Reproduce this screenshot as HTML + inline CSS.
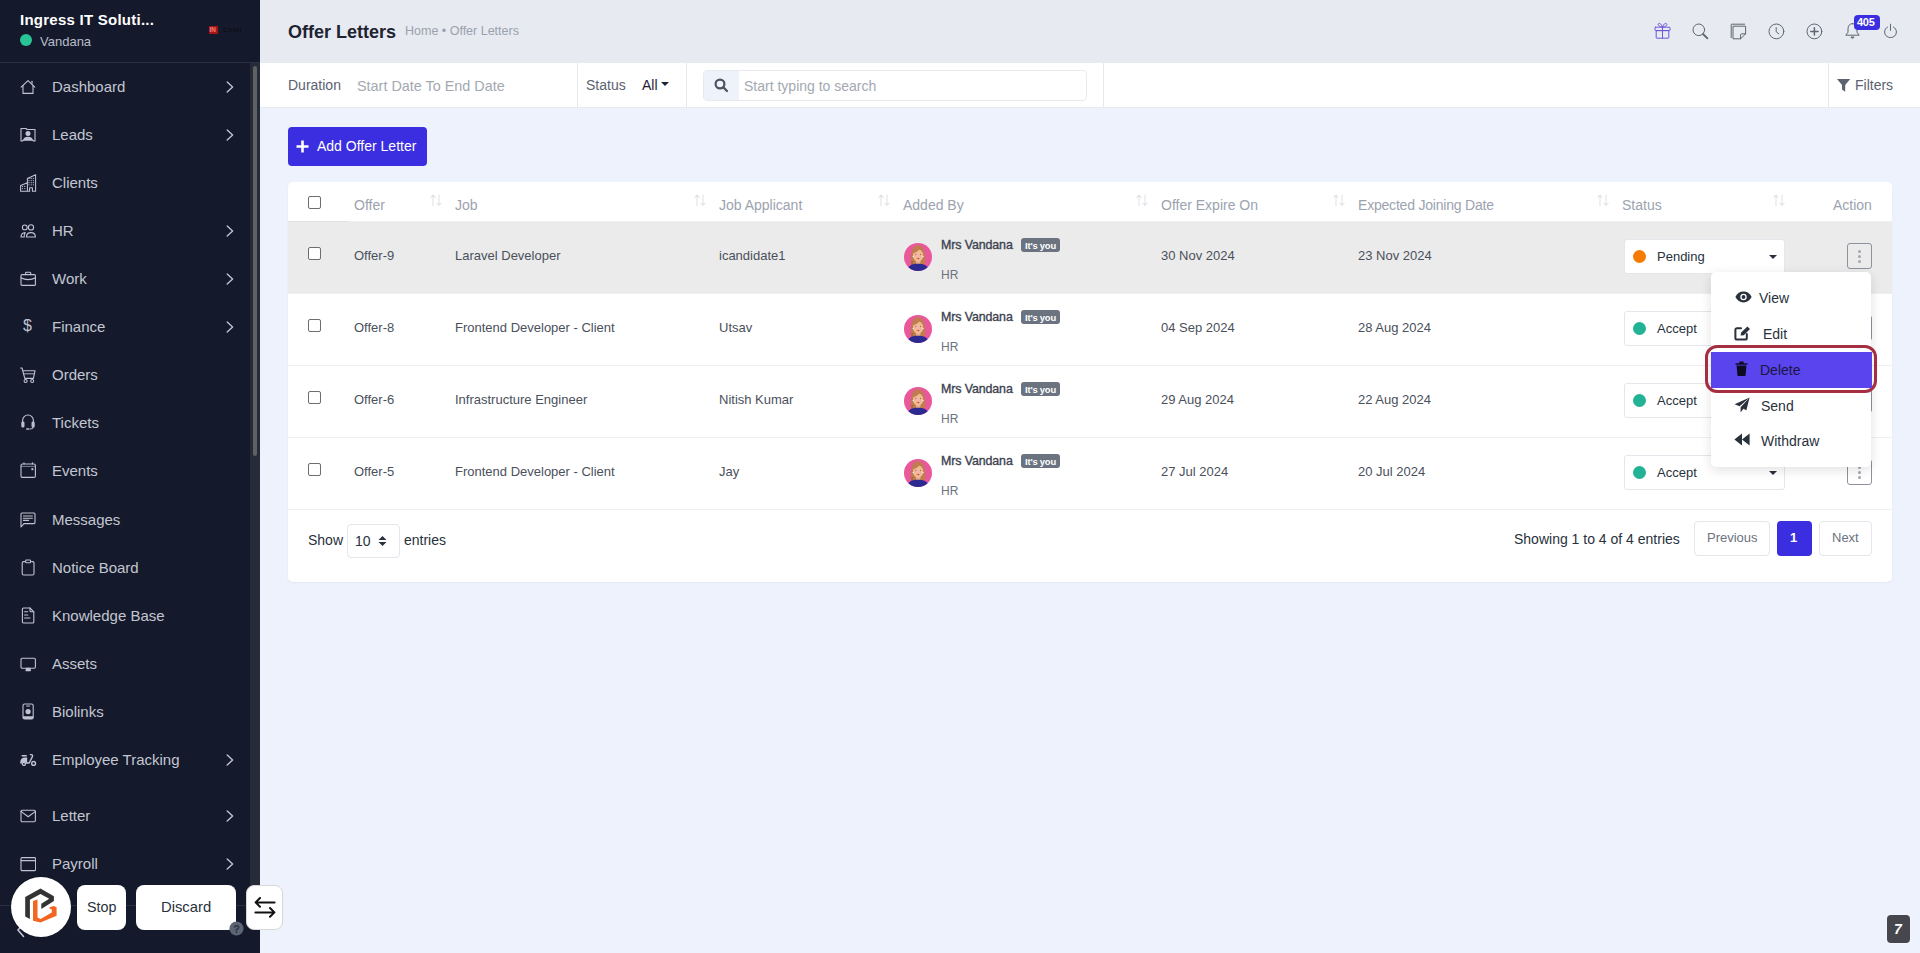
<!DOCTYPE html>
<html><head><meta charset="utf-8">
<style>
*{box-sizing:border-box;margin:0;padding:0}
html,body{width:1920px;height:953px;overflow:hidden}
body{font-family:"Liberation Sans",sans-serif;background:#eef2fc;position:relative;color:#28313c}
.abs{position:absolute}
.tx{position:absolute;white-space:nowrap;line-height:1}
#sb{position:absolute;left:0;top:0;width:260px;height:953px;background:#141a2b;overflow:hidden}
#sbh{position:absolute;left:0;top:0;width:260px;height:63px;border-bottom:1px solid #2b3040}
.brand{position:absolute;left:20px;top:11px;font-size:15px;font-weight:bold;color:#fff;white-space:nowrap;line-height:18px;letter-spacing:0.25px}
.uname{position:absolute;left:40px;top:34px;font-size:13px;color:#b9bdc9;line-height:15px}
.dot{position:absolute;left:20px;top:34px;width:12px;height:12px;border-radius:50%;background:#28c397}
.track{position:absolute;left:250px;top:63px;width:10px;height:822px;background:#252b38}
.thumb{position:absolute;left:253px;top:66px;width:4px;height:390px;border-radius:2px;background:#606163}
.mt{position:absolute;left:52px;font-size:15px;line-height:17px;color:#c3c6d2;white-space:nowrap}
.dollar{position:absolute;left:23px;font-size:16px;line-height:18px;color:#c0c4d2}
#hdr{position:absolute;left:260px;top:0;width:1660px;height:63px;background:#e7eaf1}
#fb{position:absolute;left:260px;top:63px;width:1660px;height:45px;background:#fff;border-bottom:1px solid #e6e9ef}
.vd{position:absolute;top:63px;width:1px;height:44px;background:#e6e8ed}
.card{position:absolute;left:288px;top:182px;width:1604px;height:400px;background:#fff;border-radius:5px;box-shadow:0 1px 2px rgba(30,40,90,0.05)}
.th{position:absolute;white-space:nowrap;line-height:1;font-size:14px;color:#9ca3af;top:198px}
.td{position:absolute;white-space:nowrap;line-height:1;font-size:13px;color:#4a505b}
.cb{position:absolute;left:308px;width:13px;height:13px;border:1px solid #6d6d6d;border-radius:2px;background:#fff}
.nm{position:absolute;left:941px;white-space:nowrap;line-height:1;font-size:12.4px;font-weight:normal;color:#3c4350;-webkit-text-stroke:0.35px #3c4350;letter-spacing:-0.1px}
.badge{position:absolute;left:1021px;width:39px;height:14px;border-radius:3px;background:#6b7280;color:#fff;font-size:9.4px;font-weight:bold;line-height:15px;text-align:center;letter-spacing:-0.2px}
.hr{position:absolute;left:941px;white-space:nowrap;line-height:1;font-size:12px;color:#6b7280}
.sel{position:absolute;left:1624px;width:161px;height:35px;background:#fff;border:1px solid #e4e6eb;border-radius:3px}
.sdot{position:absolute;left:8px;top:10px;width:13px;height:13px;border-radius:50%}
.stx{position:absolute;left:32px;top:10px;font-size:13px;line-height:1;color:#28313c;white-space:nowrap}
.caret{position:absolute;left:144px;top:15px;width:0;height:0;border-left:4px solid transparent;border-right:4px solid transparent;border-top:4px solid #28313c}
.act{position:absolute;left:1847px;width:25px;height:26px;border:1px solid #8d929b;border-radius:3px;background:transparent}
.act i{position:absolute;left:10px;width:3px;height:3px;border-radius:50%;background:#a3a7ae}
.act i:nth-child(1){top:6px}.act i:nth-child(2){top:11px}.act i:nth-child(3){top:16px}
.sorti{position:absolute;top:194px}
</style></head><body>
<div id="sb">
  <div id="sbh">
    <div class="brand">Ingress IT Soluti...</div>
    <div class="dot"></div>
    <div class="uname">Vandana</div>
    <div class="abs" style="left:209px;top:26px;width:8.5px;height:8px;background:#a81414;border-radius:1px"></div>
    <div class="tx" style="left:209.6px;top:27.4px;font-size:6.4px;font-weight:bold;color:#f08080;letter-spacing:-0.2px">IN</div>
    <div class="tx" style="left:223px;top:27px;font-size:6.2px;font-weight:bold;color:#0b0e18;letter-spacing:0.3px">CASH</div>
  </div>
  <div class="track"></div><div class="thumb"></div>
<div class="mt" style="top:78px">Dashboard</div>
<svg class="abs" style="left:20px;top:79px" width="16" height="16" viewBox="0 0 16 16" fill="none" stroke="#c0c4d2" stroke-width="1.1" stroke-linecap="round" stroke-linejoin="round"><path d="M1.2 8.2 L8 1.6 L14.8 8.2"/><path d="M3 6.6 V14.4 H13 V6.6"/><path d="M12 2.2 V4.6"/></svg>
<svg class="abs" style="left:226px;top:81px" width="8" height="12" viewBox="0 0 8 12" fill="none" stroke="#c0c4d2" stroke-width="1.4" stroke-linecap="round" stroke-linejoin="round"><path d="M1.2 1 L6.6 6 L1.2 11"/></svg>
<div class="mt" style="top:126px">Leads</div>
<svg class="abs" style="left:20px;top:127px" width="16" height="15" viewBox="0 0 16 15" fill="none" stroke="#c0c4d2" stroke-width="1.1" stroke-linecap="round" stroke-linejoin="round"><path d="M1 14 V1.5 H6 L7 2.5 H15 V14 H13.5 L12.5 13 H3.5 L2.5 14 Z"/><circle cx="8" cy="6.6" r="2.5" fill="#c0c4d2" stroke="none"/><path d="M3 13.6 C3.4 10.8 5.6 9.8 8 9.8 C10.4 9.8 12.6 10.8 13 13.6 Z" fill="#c0c4d2" stroke="none"/></svg>
<svg class="abs" style="left:226px;top:129px" width="8" height="12" viewBox="0 0 8 12" fill="none" stroke="#c0c4d2" stroke-width="1.4" stroke-linecap="round" stroke-linejoin="round"><path d="M1.2 1 L6.6 6 L1.2 11"/></svg>
<div class="mt" style="top:174px">Clients</div>
<svg class="abs" style="left:20px;top:174px" width="17" height="18" viewBox="0 0 17 18" fill="none" stroke="#c0c4d2" stroke-width="1.1" stroke-linecap="round" stroke-linejoin="round"><path d="M0.6 17.2 V11.6 L7.4 8.8 M7.4 17.2 V4.6 L15.6 0.8 V17.2 H12.4 V13.8 H9.6 V17.2 H0.6" stroke-width="1.05"/><g fill="#c0c4d2" stroke="none"><circle cx="2.5" cy="12.4" r="0.62"/><circle cx="4.8" cy="12.4" r="0.62"/><circle cx="2.5" cy="14.6" r="0.62"/><circle cx="4.8" cy="14.6" r="0.62"/><circle cx="9.0" cy="4.4" r="0.62"/><circle cx="11.2" cy="4.4" r="0.62"/><circle cx="13.3" cy="4.4" r="0.62"/><circle cx="9.0" cy="6.6" r="0.62"/><circle cx="11.2" cy="6.6" r="0.62"/><circle cx="13.3" cy="6.6" r="0.62"/><circle cx="9.0" cy="8.7" r="0.62"/><circle cx="11.2" cy="8.7" r="0.62"/><circle cx="13.3" cy="8.7" r="0.62"/><circle cx="9.0" cy="10.8" r="0.62"/><circle cx="11.2" cy="10.8" r="0.62"/><circle cx="13.3" cy="10.8" r="0.62"/></g></svg>
<div class="mt" style="top:222px">HR</div>
<svg class="abs" style="left:20px;top:224px" width="16" height="14" viewBox="0 0 16 14" fill="none" stroke="#c0c4d2" stroke-width="1.1" stroke-linecap="round" stroke-linejoin="round"><circle cx="4.8" cy="3.4" r="2.4"/><circle cx="11" cy="3.4" r="2.6"/><path d="M1 13 C1 10.5 2.5 8.8 5.2 8.6 C4.2 9.8 4 11.5 4.2 13 Z"/><path d="M6.4 13 C6.4 10.2 8.4 8.6 11 8.6 C13.6 8.6 15.4 10.2 15.4 13 Z"/></svg>
<svg class="abs" style="left:226px;top:225px" width="8" height="12" viewBox="0 0 8 12" fill="none" stroke="#c0c4d2" stroke-width="1.4" stroke-linecap="round" stroke-linejoin="round"><path d="M1.2 1 L6.6 6 L1.2 11"/></svg>
<div class="mt" style="top:270px">Work</div>
<svg class="abs" style="left:20px;top:271px" width="16" height="15" viewBox="0 0 16 15" fill="none" stroke="#c0c4d2" stroke-width="1.1" stroke-linecap="round" stroke-linejoin="round"><rect x="1" y="3.6" width="14.4" height="10.8" rx="1"/><path d="M5.6 3.6 V2.2 C5.6 1.6 6 1.2 6.6 1.2 H9.8 C10.4 1.2 10.8 1.6 10.8 2.2 V3.6"/><path d="M1 6.8 C5 9.2 11.4 9.2 15.4 6.8"/></svg>
<svg class="abs" style="left:226px;top:273px" width="8" height="12" viewBox="0 0 8 12" fill="none" stroke="#c0c4d2" stroke-width="1.4" stroke-linecap="round" stroke-linejoin="round"><path d="M1.2 1 L6.6 6 L1.2 11"/></svg>
<div class="mt" style="top:318px">Finance</div>
<div class="dollar" style="top:317px">$</div>
<svg class="abs" style="left:226px;top:321px" width="8" height="12" viewBox="0 0 8 12" fill="none" stroke="#c0c4d2" stroke-width="1.4" stroke-linecap="round" stroke-linejoin="round"><path d="M1.2 1 L6.6 6 L1.2 11"/></svg>
<div class="mt" style="top:366px">Orders</div>
<svg class="abs" style="left:20px;top:367px" width="16" height="17" viewBox="0 0 16 17" fill="none" stroke="#c0c4d2" stroke-width="1.1" stroke-linecap="round" stroke-linejoin="round"><path d="M0.6 1 H2 L4.8 11.4 H13.4 L15 3.8 H3"/><path d="M3.6 6.8 H14.4" stroke-width="0.9"/><circle cx="5.6" cy="14" r="1.5"/><circle cx="12.2" cy="14" r="1.5"/></svg>
<div class="mt" style="top:414px">Tickets</div>
<svg class="abs" style="left:21px;top:414px" width="14" height="17" viewBox="0 0 14 17" fill="none" stroke="#c0c4d2" stroke-width="1.1" stroke-linecap="round" stroke-linejoin="round"><path d="M1.6 9 V6.6 C1.6 3.2 4 1 7 1 C10 1 12.4 3.2 12.4 6.6 V9"/><rect x="0.9" y="8" width="2" height="5" rx="0.8" fill="#c0c4d2"/><rect x="11.1" y="8" width="2" height="5" rx="0.8" fill="#c0c4d2"/><path d="M12.2 13 C12 14.6 10.6 15 9 15"/><rect x="5" y="14.2" width="3.4" height="1.6" rx="0.8" fill="#c0c4d2" stroke="none"/></svg>
<div class="mt" style="top:462px">Events</div>
<svg class="abs" style="left:20px;top:462px" width="16" height="17" viewBox="0 0 16 17" fill="none" stroke="#c0c4d2" stroke-width="1.1" stroke-linecap="round" stroke-linejoin="round"><rect x="1" y="2" width="14.4" height="13.4" rx="1.4"/><path d="M4 0.8 V2 M12.4 0.8 V2"/><path d="M1 4.4 H15.4" stroke-width="0.6"/><rect x="11.4" y="6.2" width="2" height="2" fill="#c0c4d2" stroke="none"/></svg>
<div class="mt" style="top:511px">Messages</div>
<svg class="abs" style="left:20px;top:512px" width="16" height="16" viewBox="0 0 16 16" fill="none" stroke="#c0c4d2" stroke-width="1.1" stroke-linecap="round" stroke-linejoin="round"><path d="M2 1 H14 C14.6 1 15 1.4 15 2 V10.6 C15 11.2 14.6 11.6 14 11.6 H4 L1 15 V2 C1 1.4 1.4 1 2 1 Z"/><path d="M3.4 4 H12.4 M3.4 6.2 H12.4 M3.4 8.4 H8.6"/></svg>
<div class="mt" style="top:559px">Notice Board</div>
<svg class="abs" style="left:21px;top:559px" width="14" height="17" viewBox="0 0 14 17" fill="none" stroke="#c0c4d2" stroke-width="1.1" stroke-linecap="round" stroke-linejoin="round"><path d="M3.6 2.6 H2.6 C1.8 2.6 1.2 3.2 1.2 4 V14.6 C1.2 15.4 1.8 16 2.6 16 H11.6 C12.4 16 13 15.4 13 14.6 V4 C13 3.2 12.4 2.6 11.6 2.6 H10.6"/><rect x="4.6" y="1" width="5" height="2.8" rx="0.9"/></svg>
<div class="mt" style="top:607px">Knowledge Base</div>
<svg class="abs" style="left:21px;top:607px" width="14" height="17" viewBox="0 0 14 17" fill="none" stroke="#c0c4d2" stroke-width="1.1" stroke-linecap="round" stroke-linejoin="round"><path d="M1.4 2 C1.4 1.4 1.8 1 2.4 1 H9 L12.8 4.8 V15 C12.8 15.6 12.4 16 11.8 16 H2.4 C1.8 16 1.4 15.6 1.4 15 Z"/><path d="M9 1 V3.8 C9 4.4 9.4 4.8 10 4.8 H12.8"/><path d="M3.6 4.8 H6.6 M3.6 8 H6.8 M3.6 11 H9"/></svg>
<div class="mt" style="top:655px">Assets</div>
<svg class="abs" style="left:20px;top:657px" width="16" height="15" viewBox="0 0 16 15" fill="none" stroke="#c0c4d2" stroke-width="1.1" stroke-linecap="round" stroke-linejoin="round"><rect x="1" y="1.2" width="14.4" height="10" rx="1.2"/><path d="M6 13.6 H10.4 L9.8 11.2 H6.6 Z" fill="#c0c4d2"/></svg>
<div class="mt" style="top:703px">Biolinks</div>
<svg class="abs" style="left:22px;top:703px" width="12" height="17" viewBox="0 0 12 17" fill="none" stroke="#c0c4d2" stroke-width="1.1" stroke-linecap="round" stroke-linejoin="round"><rect x="1" y="1" width="10.2" height="15" rx="1.6"/><path d="M4.6 3 H7.6"/><circle cx="6.1" cy="8.6" r="2.6" fill="#c0c4d2" stroke="none"/><path d="M1 13.2 H11.2 V14.6 C11.2 15.4 10.6 16 9.6 16 H2.6 C1.6 16 1 15.4 1 14.6 Z" fill="#c0c4d2" stroke="none"/></svg>
<div class="mt" style="top:751px">Employee Tracking</div>
<svg class="abs" style="left:20px;top:753px" width="17" height="13" viewBox="0 0 17 13" fill="none" stroke="#c0c4d2" stroke-width="1.1" stroke-linecap="round" stroke-linejoin="round"><path d="M0.2 10 C0.2 6.4 2 4.6 5.2 4.6 H7.2 V10.6 H6 A2.2 2.2 0 0 0 1.8 10.6 H0.2 Z" fill="#c0c4d2" stroke="none"/><path d="M2.2 2.8 H6.2" stroke-width="1.5"/><circle cx="3.9" cy="10.9" r="1.5" stroke-width="1.3"/><path d="M7 10 H9.2 L12.4 3.6 C12.8 2.4 12.4 1.6 11.2 1.6 H10.4" stroke-width="1.4"/><circle cx="13.6" cy="10.4" r="1.9" stroke-width="1.4"/></svg>
<svg class="abs" style="left:226px;top:754px" width="8" height="12" viewBox="0 0 8 12" fill="none" stroke="#c0c4d2" stroke-width="1.4" stroke-linecap="round" stroke-linejoin="round"><path d="M1.2 1 L6.6 6 L1.2 11"/></svg>
<div class="mt" style="top:807px">Letter</div>
<svg class="abs" style="left:20px;top:809px" width="16" height="14" viewBox="0 0 16 14" fill="none" stroke="#c0c4d2" stroke-width="1.1" stroke-linecap="round" stroke-linejoin="round"><rect x="1" y="1.2" width="14.4" height="11.6" rx="1.2"/><path d="M1 2.4 L8.2 7.8 L15.4 2.4"/></svg>
<svg class="abs" style="left:226px;top:810px" width="8" height="12" viewBox="0 0 8 12" fill="none" stroke="#c0c4d2" stroke-width="1.4" stroke-linecap="round" stroke-linejoin="round"><path d="M1.2 1 L6.6 6 L1.2 11"/></svg>
<div class="mt" style="top:855px">Payroll</div>
<svg class="abs" style="left:20px;top:856px" width="16" height="16" viewBox="0 0 16 16" fill="none" stroke="#c0c4d2" stroke-width="1.1" stroke-linecap="round" stroke-linejoin="round"><rect x="1" y="1.6" width="14.6" height="13" rx="1.2"/><path d="M1 4.6 H15.6"/></svg>
<svg class="abs" style="left:226px;top:858px" width="8" height="12" viewBox="0 0 8 12" fill="none" stroke="#c0c4d2" stroke-width="1.4" stroke-linecap="round" stroke-linejoin="round"><path d="M1.2 1 L6.6 6 L1.2 11"/></svg>
  <div class="abs" style="left:0;top:905px;width:250px;height:1px;background:#2b3040"></div>
  <svg class="abs" style="left:16px;top:922px" width="10" height="16" viewBox="0 0 10 16" fill="none" stroke="#c0c4d2" stroke-width="1.6" stroke-linecap="round"><path d="M7.5 1.5 L2 8 L7.5 14.5"/></svg>
</div>

<div id="hdr">
  <div class="tx" style="left:28px;top:23px;font-size:18px;font-weight:bold;color:#1d2330">Offer Letters</div>
  <div class="tx" style="left:145px;top:25px;font-size:12.5px;color:#9ba1ab">Home &bull; Offer Letters</div>
</div>
<svg class="abs" style="left:1654px;top:22px" width="17" height="17" viewBox="0 0 17 17" fill="none" stroke="#6e56da" stroke-width="1.0" stroke-linecap="round" stroke-linejoin="round"><rect x="1" y="5.2" width="15" height="3.4" rx="0.6"/><rect x="2.2" y="8.6" width="12.6" height="7.6" rx="0.4"/><path d="M8.5 5.2 V16.2"/><path d="M8.5 5.2 C7.6 2.2 5.8 0.8 4.6 1.6 C3.4 2.4 4.2 4.4 8.5 5.2 Z"/><path d="M8.5 5.2 C9.4 2.2 11.2 0.8 12.4 1.6 C13.6 2.4 12.8 4.4 8.5 5.2 Z"/></svg>
<svg class="abs" style="left:1692px;top:23px" width="17" height="17" viewBox="0 0 17 17" fill="none" stroke="#5f6571" stroke-width="1.0" stroke-linecap="round" stroke-linejoin="round"><circle cx="6.8" cy="6.8" r="5.8"/><path d="M11 11 L15.4 15.4" stroke-width="1.8"/></svg>
<svg class="abs" style="left:1730px;top:23px" width="17" height="17" viewBox="0 0 17 17" fill="none" stroke="#5f6571" stroke-width="1.0" stroke-linecap="round" stroke-linejoin="round"><path d="M3.4 3.2 H15.6 V10.8 L10.6 15.8 H3.4 Z"/><path d="M15.6 10.8 H11.6 C11 10.8 10.6 11.2 10.6 11.8 V15.8"/><path d="M1.2 14.6 V1.6 C1.2 1.3 1.3 1.2 1.6 1.2 H14.6"/></svg>
<svg class="abs" style="left:1768px;top:23px" width="17" height="17" viewBox="0 0 17 17" fill="none" stroke="#5f6571" stroke-width="1.0" stroke-linecap="round" stroke-linejoin="round"><circle cx="8.4" cy="8.4" r="7.4"/><path d="M8.2 4.6 V8.8 L10.8 10.8"/></svg>
<svg class="abs" style="left:1806px;top:23px" width="17" height="17" viewBox="0 0 17 17" fill="none" stroke="#5f6571" stroke-width="1.0" stroke-linecap="round" stroke-linejoin="round"><circle cx="8.4" cy="8.4" r="7.4"/><path d="M8.4 4.8 V12 M4.8 8.4 H12" stroke-width="1.5"/></svg>
<svg class="abs" style="left:1844px;top:22px" width="17" height="18" viewBox="0 0 17 18" fill="none" stroke="#5f6571" stroke-width="1.0" stroke-linecap="round" stroke-linejoin="round"><path d="M8.5 1.6 C5.6 1.6 4 3.8 4 6.8 V10.2 L1.8 13.2 H15.2 L13 10.2 V6.8 C13 3.8 11.4 1.6 8.5 1.6 Z"/><path d="M7 15.4 C7.2 16.4 9.8 16.4 10 15.4 Z" fill="#5f6571"/></svg>
<div class="abs" style="left:1854px;top:15px;width:26px;height:15px;border-radius:4px;background:#3b2ee0"></div><div class="tx" style="left:1857px;top:17px;font-size:11px;font-weight:bold;color:#fff;letter-spacing:-0.3px">405</div>
<svg class="abs" style="left:1883px;top:23px" width="15" height="16" viewBox="0 0 15 16" fill="none" stroke="#5f6571" stroke-width="1.0" stroke-linecap="round" stroke-linejoin="round"><path d="M7.5 1.2 V7.4"/><path d="M4.6 4 C2.8 5 1.6 6.8 1.6 9 C1.6 12.2 4.2 14.6 7.5 14.6 C10.8 14.6 13.4 12.2 13.4 9 C13.4 6.8 12.2 5 10.4 4"/></svg>

<div id="fb"></div>
<div class="tx" style="left:288px;top:78px;font-size:14px;color:#5b6270">Duration</div>
<div class="tx" style="left:357px;top:79px;font-size:14.4px;color:#a3a8b1">Start Date To End Date</div>
<div class="vd" style="left:577px"></div>
<div class="tx" style="left:586px;top:78px;font-size:14px;color:#5b6270">Status</div>
<div class="tx" style="left:642px;top:78px;font-size:14px;color:#1d2330">All</div>
<div class="abs" style="left:661px;top:82px;width:0;height:0;border-left:4.5px solid transparent;border-right:4.5px solid transparent;border-top:4.5px solid #1d2330"></div>
<div class="vd" style="left:686px"></div>
<div class="abs" style="left:703px;top:70px;width:384px;height:31px;border:1px solid #e8eaf0;border-radius:4px;background:#fff"></div>
<div class="abs" style="left:704px;top:71px;width:35px;height:29px;background:#eef2fb;border-radius:3px 0 0 3px"></div>
<svg class="abs" style="left:714px;top:78px" width="15" height="15" viewBox="0 0 15 15" fill="none" stroke="#4b5260" stroke-width="2.2" stroke-linecap="round"><circle cx="6" cy="6" r="4.4"/><path d="M9.4 9.4 L13 13"/></svg>
<div class="tx" style="left:744px;top:79px;font-size:14px;color:#a3a8b1">Start typing to search</div>
<div class="vd" style="left:1103px"></div>
<div class="vd" style="left:1828px"></div>
<svg class="abs" style="left:1837px;top:79px" width="14" height="13" viewBox="0 0 14 13"><path d="M0 0 H13.2 L8.2 6 V12.8 L5 10.4 V6 Z" fill="#5b6270"/></svg>
<div class="tx" style="left:1855px;top:78px;font-size:14px;color:#5b6270">Filters</div>

<div class="abs" style="left:288px;top:127px;width:139px;height:39px;background:#3b2ee0;border-radius:4px"></div>
<svg class="abs" style="left:296px;top:140px" width="13" height="13" viewBox="0 0 13 13" fill="none" stroke="#fff" stroke-width="2.6"><path d="M6.5 0.5 V12.5 M0.5 6.5 H12.5"/></svg>
<div class="tx" style="left:317px;top:139px;font-size:14px;color:#fff">Add Offer Letter</div>

<div class="card"></div>
<div class="abs" style="left:288px;top:221px;width:1604px;height:1px;background:#eef0f3"></div>
<div class="abs" style="left:288px;top:221px;width:60px;height:1px;background:#dfe1e5"></div>
<div class="cb" style="top:196px"></div>
<div class="th" style="left:354px">Offer</div>
<div class="th" style="left:455px">Job</div>
<div class="th" style="left:719px">Job Applicant</div>
<div class="th" style="left:903px">Added By</div>
<div class="th" style="left:1161px">Offer Expire On</div>
<div class="th" style="left:1358px;letter-spacing:-0.2px">Expected Joining Date</div>
<div class="th" style="left:1622px">Status</div>
<div class="th" style="left:1833px">Action</div>
<svg class="abs" style="left:430px;top:194px" width="12" height="12" viewBox="0 0 12 12" fill="none" stroke="#e1e3e7" stroke-width="1.1" stroke-linecap="round" stroke-linejoin="round"><path d="M3 11.4 V1 M0.8 3.4 L3 1 L5.2 3.4"/><path d="M9 1 V11.4 M6.8 9 L9 11.4 L11.2 9"/></svg>
<svg class="abs" style="left:694px;top:194px" width="12" height="12" viewBox="0 0 12 12" fill="none" stroke="#e1e3e7" stroke-width="1.1" stroke-linecap="round" stroke-linejoin="round"><path d="M3 11.4 V1 M0.8 3.4 L3 1 L5.2 3.4"/><path d="M9 1 V11.4 M6.8 9 L9 11.4 L11.2 9"/></svg>
<svg class="abs" style="left:878px;top:194px" width="12" height="12" viewBox="0 0 12 12" fill="none" stroke="#e1e3e7" stroke-width="1.1" stroke-linecap="round" stroke-linejoin="round"><path d="M3 11.4 V1 M0.8 3.4 L3 1 L5.2 3.4"/><path d="M9 1 V11.4 M6.8 9 L9 11.4 L11.2 9"/></svg>
<svg class="abs" style="left:1136px;top:194px" width="12" height="12" viewBox="0 0 12 12" fill="none" stroke="#e1e3e7" stroke-width="1.1" stroke-linecap="round" stroke-linejoin="round"><path d="M3 11.4 V1 M0.8 3.4 L3 1 L5.2 3.4"/><path d="M9 1 V11.4 M6.8 9 L9 11.4 L11.2 9"/></svg>
<svg class="abs" style="left:1333px;top:194px" width="12" height="12" viewBox="0 0 12 12" fill="none" stroke="#e1e3e7" stroke-width="1.1" stroke-linecap="round" stroke-linejoin="round"><path d="M3 11.4 V1 M0.8 3.4 L3 1 L5.2 3.4"/><path d="M9 1 V11.4 M6.8 9 L9 11.4 L11.2 9"/></svg>
<svg class="abs" style="left:1597px;top:194px" width="12" height="12" viewBox="0 0 12 12" fill="none" stroke="#e1e3e7" stroke-width="1.1" stroke-linecap="round" stroke-linejoin="round"><path d="M3 11.4 V1 M0.8 3.4 L3 1 L5.2 3.4"/><path d="M9 1 V11.4 M6.8 9 L9 11.4 L11.2 9"/></svg>
<svg class="abs" style="left:1773px;top:194px" width="12" height="12" viewBox="0 0 12 12" fill="none" stroke="#e1e3e7" stroke-width="1.1" stroke-linecap="round" stroke-linejoin="round"><path d="M3 11.4 V1 M0.8 3.4 L3 1 L5.2 3.4"/><path d="M9 1 V11.4 M6.8 9 L9 11.4 L11.2 9"/></svg>
<div class="abs" style="left:288px;top:222px;width:1604px;height:71px;background:#ebebeb"></div>
<div class="abs" style="left:288px;top:293px;width:1604px;height:1px;background:#eeeff2"></div>
<div class="cb" style="top:247px"></div>
<div class="td" style="left:354px;top:249px">Offer-9</div>
<div class="td" style="left:455px;top:249px">Laravel Developer</div>
<div class="td" style="left:719px;top:249px">icandidate1</div>
<div class="td" style="left:1161px;top:249px">30 Nov 2024</div>
<div class="td" style="left:1358px;top:249px">23 Nov 2024</div>
<svg class="abs" style="left:904px;top:243px" width="28" height="28" viewBox="0 0 28 28"><defs><clipPath id="ac0"><circle cx="14" cy="14" r="14"/></clipPath></defs><g clip-path="url(#ac0)"><rect width="28" height="28" fill="#e9589a"/><path d="M7 21 C6.4 12 7.4 2.8 14 2.2 C20.6 2.8 21.6 12 21 21 Z" fill="#bf7d4c"/><path d="M7.2 18 L7.6 27 L9.2 27 L9.4 18 Z" fill="#a86a40"/><rect x="12" y="16.5" width="4.4" height="5" fill="#e8ab88"/><ellipse cx="14.1" cy="12.4" rx="5.1" ry="6.3" fill="#f1b99a"/><path d="M8.8 10.2 C9 5.8 11.4 4 14.2 4 C17 4 19.4 5.6 19.6 10.2 C18.2 8.2 16.6 7.2 15.4 6.6 C13.8 8.6 11.2 9.8 8.8 10.2 Z" fill="#bf7d4c"/><circle cx="11.8" cy="11.3" r="0.55" fill="#6b4636"/><circle cx="16.6" cy="11.3" r="0.55" fill="#6b4636"/><ellipse cx="14.2" cy="15.6" rx="1.3" ry="0.6" fill="#c63d3a"/><circle cx="9.3" cy="13.6" r="0.7" fill="#fff"/><circle cx="19" cy="13.6" r="0.7" fill="#fff"/><path d="M3 28 C3.4 23.4 6.6 20.8 14 20.8 C21.4 20.8 24.6 23.4 25 28 Z" fill="#2c2a90"/></g></svg>
<div class="nm" style="top:239px">Mrs Vandana</div>
<div class="badge" style="top:238px">It's you</div>
<div class="hr" style="top:269px">HR</div>
<div class="sel" style="top:239px"><div class="sdot" style="background:#f57c00"></div><div class="stx">Pending</div><div class="caret"></div></div>
<div class="act" style="top:243px"><i></i><i></i><i></i></div>
<div class="abs" style="left:288px;top:365px;width:1604px;height:1px;background:#eeeff2"></div>
<div class="cb" style="top:319px"></div>
<div class="td" style="left:354px;top:321px">Offer-8</div>
<div class="td" style="left:455px;top:321px">Frontend Developer - Client</div>
<div class="td" style="left:719px;top:321px">Utsav</div>
<div class="td" style="left:1161px;top:321px">04 Sep 2024</div>
<div class="td" style="left:1358px;top:321px">28 Aug 2024</div>
<svg class="abs" style="left:904px;top:315px" width="28" height="28" viewBox="0 0 28 28"><defs><clipPath id="ac1"><circle cx="14" cy="14" r="14"/></clipPath></defs><g clip-path="url(#ac1)"><rect width="28" height="28" fill="#e9589a"/><path d="M7 21 C6.4 12 7.4 2.8 14 2.2 C20.6 2.8 21.6 12 21 21 Z" fill="#bf7d4c"/><path d="M7.2 18 L7.6 27 L9.2 27 L9.4 18 Z" fill="#a86a40"/><rect x="12" y="16.5" width="4.4" height="5" fill="#e8ab88"/><ellipse cx="14.1" cy="12.4" rx="5.1" ry="6.3" fill="#f1b99a"/><path d="M8.8 10.2 C9 5.8 11.4 4 14.2 4 C17 4 19.4 5.6 19.6 10.2 C18.2 8.2 16.6 7.2 15.4 6.6 C13.8 8.6 11.2 9.8 8.8 10.2 Z" fill="#bf7d4c"/><circle cx="11.8" cy="11.3" r="0.55" fill="#6b4636"/><circle cx="16.6" cy="11.3" r="0.55" fill="#6b4636"/><ellipse cx="14.2" cy="15.6" rx="1.3" ry="0.6" fill="#c63d3a"/><circle cx="9.3" cy="13.6" r="0.7" fill="#fff"/><circle cx="19" cy="13.6" r="0.7" fill="#fff"/><path d="M3 28 C3.4 23.4 6.6 20.8 14 20.8 C21.4 20.8 24.6 23.4 25 28 Z" fill="#2c2a90"/></g></svg>
<div class="nm" style="top:311px">Mrs Vandana</div>
<div class="badge" style="top:310px">It's you</div>
<div class="hr" style="top:341px">HR</div>
<div class="sel" style="top:311px"><div class="sdot" style="background:#21b394"></div><div class="stx">Accept</div><div class="caret"></div></div>
<div class="act" style="top:315px"><i></i><i></i><i></i></div>
<div class="abs" style="left:288px;top:437px;width:1604px;height:1px;background:#eeeff2"></div>
<div class="cb" style="top:391px"></div>
<div class="td" style="left:354px;top:393px">Offer-6</div>
<div class="td" style="left:455px;top:393px">Infrastructure Engineer</div>
<div class="td" style="left:719px;top:393px">Nitish Kumar</div>
<div class="td" style="left:1161px;top:393px">29 Aug 2024</div>
<div class="td" style="left:1358px;top:393px">22 Aug 2024</div>
<svg class="abs" style="left:904px;top:387px" width="28" height="28" viewBox="0 0 28 28"><defs><clipPath id="ac2"><circle cx="14" cy="14" r="14"/></clipPath></defs><g clip-path="url(#ac2)"><rect width="28" height="28" fill="#e9589a"/><path d="M7 21 C6.4 12 7.4 2.8 14 2.2 C20.6 2.8 21.6 12 21 21 Z" fill="#bf7d4c"/><path d="M7.2 18 L7.6 27 L9.2 27 L9.4 18 Z" fill="#a86a40"/><rect x="12" y="16.5" width="4.4" height="5" fill="#e8ab88"/><ellipse cx="14.1" cy="12.4" rx="5.1" ry="6.3" fill="#f1b99a"/><path d="M8.8 10.2 C9 5.8 11.4 4 14.2 4 C17 4 19.4 5.6 19.6 10.2 C18.2 8.2 16.6 7.2 15.4 6.6 C13.8 8.6 11.2 9.8 8.8 10.2 Z" fill="#bf7d4c"/><circle cx="11.8" cy="11.3" r="0.55" fill="#6b4636"/><circle cx="16.6" cy="11.3" r="0.55" fill="#6b4636"/><ellipse cx="14.2" cy="15.6" rx="1.3" ry="0.6" fill="#c63d3a"/><circle cx="9.3" cy="13.6" r="0.7" fill="#fff"/><circle cx="19" cy="13.6" r="0.7" fill="#fff"/><path d="M3 28 C3.4 23.4 6.6 20.8 14 20.8 C21.4 20.8 24.6 23.4 25 28 Z" fill="#2c2a90"/></g></svg>
<div class="nm" style="top:383px">Mrs Vandana</div>
<div class="badge" style="top:382px">It's you</div>
<div class="hr" style="top:413px">HR</div>
<div class="sel" style="top:383px"><div class="sdot" style="background:#21b394"></div><div class="stx">Accept</div><div class="caret"></div></div>
<div class="act" style="top:387px"><i></i><i></i><i></i></div>
<div class="abs" style="left:288px;top:509px;width:1604px;height:1px;background:#eeeff2"></div>
<div class="cb" style="top:463px"></div>
<div class="td" style="left:354px;top:465px">Offer-5</div>
<div class="td" style="left:455px;top:465px">Frontend Developer - Client</div>
<div class="td" style="left:719px;top:465px">Jay</div>
<div class="td" style="left:1161px;top:465px">27 Jul 2024</div>
<div class="td" style="left:1358px;top:465px">20 Jul 2024</div>
<svg class="abs" style="left:904px;top:459px" width="28" height="28" viewBox="0 0 28 28"><defs><clipPath id="ac3"><circle cx="14" cy="14" r="14"/></clipPath></defs><g clip-path="url(#ac3)"><rect width="28" height="28" fill="#e9589a"/><path d="M7 21 C6.4 12 7.4 2.8 14 2.2 C20.6 2.8 21.6 12 21 21 Z" fill="#bf7d4c"/><path d="M7.2 18 L7.6 27 L9.2 27 L9.4 18 Z" fill="#a86a40"/><rect x="12" y="16.5" width="4.4" height="5" fill="#e8ab88"/><ellipse cx="14.1" cy="12.4" rx="5.1" ry="6.3" fill="#f1b99a"/><path d="M8.8 10.2 C9 5.8 11.4 4 14.2 4 C17 4 19.4 5.6 19.6 10.2 C18.2 8.2 16.6 7.2 15.4 6.6 C13.8 8.6 11.2 9.8 8.8 10.2 Z" fill="#bf7d4c"/><circle cx="11.8" cy="11.3" r="0.55" fill="#6b4636"/><circle cx="16.6" cy="11.3" r="0.55" fill="#6b4636"/><ellipse cx="14.2" cy="15.6" rx="1.3" ry="0.6" fill="#c63d3a"/><circle cx="9.3" cy="13.6" r="0.7" fill="#fff"/><circle cx="19" cy="13.6" r="0.7" fill="#fff"/><path d="M3 28 C3.4 23.4 6.6 20.8 14 20.8 C21.4 20.8 24.6 23.4 25 28 Z" fill="#2c2a90"/></g></svg>
<div class="nm" style="top:455px">Mrs Vandana</div>
<div class="badge" style="top:454px">It's you</div>
<div class="hr" style="top:485px">HR</div>
<div class="sel" style="top:455px"><div class="sdot" style="background:#21b394"></div><div class="stx">Accept</div><div class="caret"></div></div>
<div class="act" style="top:459px"><i></i><i></i><i></i></div>

<div class="tx" style="left:308px;top:533px;font-size:14px;color:#28313c">Show</div>
<div class="abs" style="left:347px;top:524px;width:53px;height:34px;border:1px solid #e4e6eb;border-radius:4px"></div>
<div class="tx" style="left:355px;top:534px;font-size:14px;color:#28313c">10</div>
<svg class="abs" style="left:378px;top:536px" width="9" height="10" viewBox="0 0 9 10"><path d="M0.5 4 L4.5 0 L8.5 4 Z M0.5 6 L4.5 10 L8.5 6 Z" fill="#28313c"/></svg>
<div class="tx" style="left:404px;top:533px;font-size:14px;color:#28313c">entries</div>

<div class="tx" style="left:1514px;top:532px;font-size:14px;color:#28313c">Showing 1 to 4 of 4 entries</div>
<div class="abs" style="left:1694px;top:521px;width:76px;height:35px;border:1px solid #e4e6eb;border-radius:4px;background:#fff"></div>
<div class="tx" style="left:1707px;top:531px;font-size:13px;color:#6b7280">Previous</div>
<div class="abs" style="left:1777px;top:521px;width:35px;height:35px;border-radius:4px;background:#3b2ee0"></div>
<div class="tx" style="left:1790px;top:531px;font-size:13px;color:#fff;font-weight:bold">1</div>
<div class="abs" style="left:1819px;top:521px;width:53px;height:35px;border:1px solid #e4e6eb;border-radius:4px;background:#fff"></div>
<div class="tx" style="left:1832px;top:531px;font-size:13px;color:#6b7280">Next</div>

<div class="abs" style="left:1711px;top:272px;width:160px;height:195px;background:#fff;border-radius:5px;box-shadow:0 3px 12px rgba(0,0,0,0.12)"></div>
<svg class="abs" style="left:1735px;top:291px" width="17" height="12" viewBox="0 0 17 12" fill="none" stroke="#5f6571" stroke-width="1.0" stroke-linecap="round" stroke-linejoin="round"><path d="M0.4 6 C2.2 2.4 5 0.6 8.5 0.6 C12 0.6 14.8 2.4 16.6 6 C14.8 9.6 12 11.4 8.5 11.4 C5 11.4 2.2 9.6 0.4 6 Z" fill="#28313c" stroke="none"/><circle cx="8.5" cy="6" r="3.2" fill="#fff" stroke="none"/><circle cx="8.5" cy="6" r="1.9" fill="#28313c" stroke="none"/></svg>
<div class="tx" style="left:1759px;top:291px;font-size:14px;color:#28313c">View</div>
<svg class="abs" style="left:1734px;top:325px" width="17" height="16" viewBox="0 0 17 16" fill="none" stroke="#28313c" stroke-width="1.0" stroke-linecap="round" stroke-linejoin="round"><path d="M7 3.2 H3 C2 3.2 1.4 3.8 1.4 4.8 V13 C1.4 14 2 14.6 3 14.6 H11.2 C12.2 14.6 12.8 14 12.8 13 V9" stroke-width="2"/><path d="M6.6 10.6 L7.2 7.6 L13.4 1.4 L16 4 L9.8 10.2 Z" fill="#28313c" stroke="none"/></svg>
<div class="tx" style="left:1763px;top:327px;font-size:14px;color:#28313c">Edit</div>
<div class="abs" style="left:1705px;top:345px;width:172px;height:48px;border:3.8px solid #a32f40;border-radius:12px"></div>
<div class="abs" style="left:1711px;top:352px;width:161px;height:36px;background:#5944ee"></div>
<svg class="abs" style="left:1735px;top:361px" width="13" height="15" viewBox="0 0 13 15" fill="none" stroke="#5f6571" stroke-width="1.0" stroke-linecap="round" stroke-linejoin="round"><path d="M0.6 2.2 H12.4 V3.8 H0.6 Z M4.4 0.6 H8.6 V2.2 H4.4 Z M1.6 4.6 H11.4 L10.6 14.2 C10.6 14.6 10.2 15 9.8 15 H3.2 C2.8 15 2.4 14.6 2.4 14.2 Z" fill="#0d0b22" stroke="none"/></svg>
<div class="tx" style="left:1760px;top:363px;font-size:14px;color:#1a1740">Delete</div>
<svg class="abs" style="left:1734px;top:397px" width="16" height="16" viewBox="0 0 16 16" fill="none" stroke="#5f6571" stroke-width="1.0" stroke-linecap="round" stroke-linejoin="round"><path d="M15.6 0.4 L0.6 7.2 L5.6 9.2 Z M15.6 0.4 L6.6 10.2 L6.6 15.4 L9.4 11.8 L12.4 13.2 Z" fill="#28313c" stroke="none"/></svg>
<div class="tx" style="left:1761px;top:399px;font-size:14px;color:#28313c">Send</div>
<svg class="abs" style="left:1734px;top:433px" width="16" height="13" viewBox="0 0 16 13" fill="none" stroke="#5f6571" stroke-width="1.0" stroke-linecap="round" stroke-linejoin="round"><path d="M8 0.6 V12.4 L0.4 6.5 Z M15.6 0.6 V12.4 L8 6.5 Z" fill="#28313c" stroke="none"/></svg>
<div class="tx" style="left:1761px;top:434px;font-size:14px;color:#28313c">Withdraw</div>
<div class="abs" style="left:11px;top:877px;width:60px;height:60px;border-radius:50%;background:#fff;box-shadow:0 0 3px rgba(0,0,0,0.2)"></div>
<svg class="abs" style="left:20px;top:886px" width="42" height="42" viewBox="0 0 42 42"><path d="M5.2 30.4 V11 L20.5 2.6 L33.9 10.2 V15.1 L21.3 23 V17.8 L29.2 12.8 L20.5 8 L9.9 13.8 V33 Z" fill="#333"/><path d="M13 15.1 L17.5 13.6 V31.4 L20.5 33.1 L31.8 26.4 V23.4 L29.6 22.7 V21.3 L33.7 19.9 L36.6 21.2 V29.8 L20.5 36.4 L13 34.8 Z" fill="#f26522"/></svg>
<div class="abs" style="left:77px;top:885px;width:49px;height:45px;border-radius:8px;background:#fff"></div><div class="tx" style="left:87px;top:900px;font-size:14.3px;color:#28313c">Stop</div>
<div class="abs" style="left:136px;top:885px;width:100px;height:45px;border-radius:8px;background:#fff"></div><div class="tx" style="left:161px;top:900px;font-size:14.8px;color:#28313c">Discard</div>
<div class="abs" style="left:246px;top:885px;width:37px;height:45px;border-radius:8px;background:#fff;border:1px solid #d7d7d7"></div>
<svg class="abs" style="left:254px;top:897px" width="22" height="21" viewBox="0 0 22 21" fill="none" stroke="#111" stroke-width="2" stroke-linecap="round" stroke-linejoin="round"><path d="M20.6 5.4 H1.6 M6 1 L1.6 5.4 L6 9.8"/><path d="M1.4 15.4 H20.4 M16 11 L20.4 15.4 L16 19.8"/></svg>
<svg class="abs" style="left:229px;top:921px" width="15" height="15" viewBox="0 0 16 16"><circle cx="8" cy="8" r="7.5" fill="#5d6473"/><text x="8" y="12.4" text-anchor="middle" font-family="Liberation Sans" font-weight="bold" font-size="11.5" fill="#2a3040">?</text></svg>
<div class="abs" style="left:1887px;top:915px;width:23px;height:28px;border-radius:4px;background:#45474d;box-shadow:0 0 2px #fff"></div>
<div class="tx" style="left:1894px;top:922px;font-size:14px;color:#fff;font-weight:bold;font-style:italic">7</div>
</body></html>
